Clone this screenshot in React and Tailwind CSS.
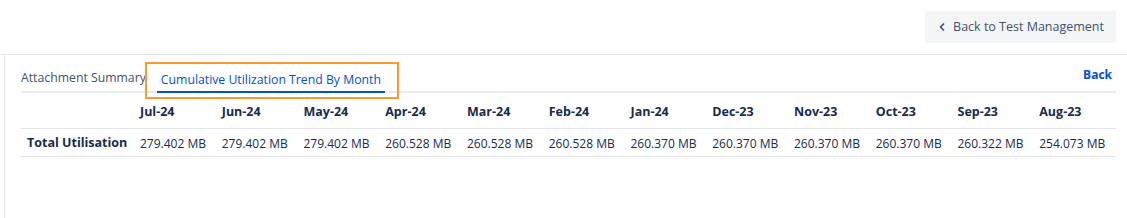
import { ChevronLeft } from "lucide-react";

const months = [
  ["Jul-24", "279.402 MB"],
  ["Jun-24", "279.402 MB"],
  ["May-24", "279.402 MB"],
  ["Apr-24", "260.528 MB"],
  ["Mar-24", "260.528 MB"],
  ["Feb-24", "260.528 MB"],
  ["Jan-24", "260.370 MB"],
  ["Dec-23", "260.370 MB"],
  ["Nov-23", "260.370 MB"],
  ["Oct-23", "260.370 MB"],
  ["Sep-23", "260.322 MB"],
  ["Aug-23", "254.073 MB"],
];

export default function App() {
  return (
    <div className="w-[1127px] h-[218px] bg-white text-[#172b4d] font-['Open_Sans',sans-serif] overflow-hidden">
      <div className="h-[55px] border-b border-[#e4e5e9] flex items-start justify-end pr-[11px] pt-[11px]">
        <button className="h-[32px] pl-[11px] pr-[12px] bg-[#f4f5f7] rounded-[3px] flex items-center gap-[5px] text-[12.5px] text-[#42526e]">
          <ChevronLeft size={12} strokeWidth={3.5} />
          <span>Back to Test Management</span>
        </button>
      </div>

      <div className="ml-[4px] border-l border-[#e4e5e9] h-[163px] pl-[16px] pr-[11px]">
        <div className="relative flex items-end justify-between border-b-2 border-[#ebecf0] h-[38px]">
          <div className="flex items-end text-[12.25px]">
            <div className="pb-[4px] pr-[11px] text-[#42526e]">Attachment Summary</div>
            <div className="pb-[2px] px-[4px] text-[#0052cc] border-b-2 border-[#0052cc] -mb-[2px]">
              Cumulative Utilization Trend By Month
            </div>
          </div>
          <a className="text-[12px] font-bold text-[#0052cc] mb-[7px] mr-[4px]">Back</a>
          <div className="absolute left-[124px] top-[7px] w-[254px] h-[37px] border-[2.5px] border-[#f69b33]" />
        </div>

        <table className="w-full border-collapse text-[12px] table-fixed">
          <colgroup>
            <col className="w-[114px]" />
          </colgroup>
          <thead>
            <tr className="border-b border-[#e4e5e9] h-[35px]">
              <th />
              {months.map(([m]) => (
                <th key={m} className="text-left font-bold pl-[5px] pt-[4px] text-[12.5px]">{m}</th>
              ))}
            </tr>
          </thead>
          <tbody>
            <tr className="border-b border-[#e4e5e9] h-[28px]">
              <td className="font-bold pl-[6px] pt-[3px] text-[12.5px]">Total Utilisation</td>
              {months.map(([m, v]) => (
                <td key={m} className="pl-[5px] pt-[3px] whitespace-nowrap">{v}</td>
              ))}
            </tr>
          </tbody>
        </table>
      </div>
    </div>
  );
}
